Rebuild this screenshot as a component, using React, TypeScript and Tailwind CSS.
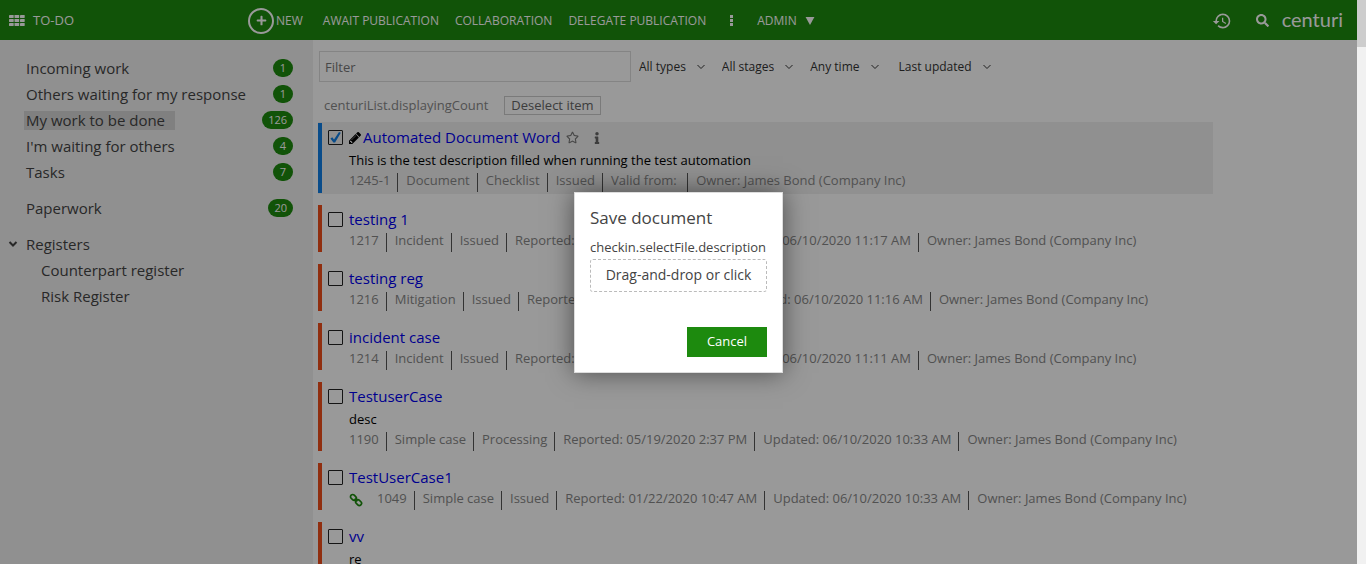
import React from "react";
import { FaInfo, FaPlus, FaRegStar, FaSearch } from "react-icons/fa";
import { MdHistory } from "react-icons/md";

type NavItem = { label: string; count?: number; active?: boolean };

const workItems: NavItem[] = [
  { label: "Incoming work", count: 1 },
  { label: "Others waiting for my response", count: 1 },
  { label: "My work to be done", count: 126, active: true },
  { label: "I'm waiting for others", count: 4 },
  { label: "Tasks", count: 7 },
];

type Row = {
  title: string;
  description?: string;
  meta: string[];
  selected?: boolean;
  linked?: boolean;
};

const owner = "Owner: James Bond (Company Inc)";

const rows: Row[] = [
  {
    title: "Automated Document Word",
    description: "This is the test description filled when running the test automation",
    meta: ["1245-1", "Document", "Checklist", "Issued", "Valid from:\u00a0", owner],
    selected: true,
  },
  {
    title: "testing 1",
    meta: ["1217", "Incident", "Issued", "Reported: 06/10/2020 11:17 AM", "Updated: 06/10/2020 11:17 AM", owner],
  },
  {
    title: "testing reg",
    meta: ["1216", "Mitigation", "Issued", "Reported: 06/10/2020 11:16 AM", "Updated: 06/10/2020 11:16 AM", owner],
  },
  {
    title: "incident case",
    meta: ["1214", "Incident", "Issued", "Reported: 06/10/2020 11:11 AM", "Updated: 06/10/2020 11:11 AM", owner],
  },
  {
    title: "TestuserCase",
    description: "desc",
    meta: ["1190", "Simple case", "Processing", "Reported: 05/19/2020 2:37 PM", "Updated: 06/10/2020 10:33 AM", owner],
  },
  {
    title: "TestUserCase1",
    meta: ["1049", "Simple case", "Issued", "Reported: 01/22/2020 10:47 AM", "Updated: 06/10/2020 10:33 AM", owner],
    linked: true,
  },
  { title: "vv", description: "re", meta: [] },
];

function Chevron({ className }: { className: string }) {
  return (
    <svg viewBox="0 0 10 6" className={className} fill="none" stroke="currentColor" aria-hidden="true">
      <path d="M1.5 1l3.5 3.5L8.5 1" />
    </svg>
  );
}

function GridIcon() {
  return (
    <svg viewBox="0 0 16 11" className="h-[11px] w-4" fill="currentColor" aria-hidden="true">
      {[0, 4, 8].map((y) =>
        [0, 5.5, 11].map((x) => <rect key={`${x}-${y}`} x={x} y={y} width="4.7" height="3" rx="0.4" />),
      )}
    </svg>
  );
}

function PencilIcon() {
  return (
    <svg viewBox="128 149 1515 1515" className="size-3 text-black" fill="currentColor" aria-hidden="true">
      <path d="M491 1536l91-91-235-235-91 91v107h128v128h107zM1014 608q0-22-22-22-10 0-17 7l-542 542q-7 7-7 17 0 22 22 22 10 0 17-7l542-542q7-7 7-17zM960 416l416 416-832 832h-416v-416zM1643 512q0 53-37 90l-166 166-416-416 166-165q36-38 90-38 53 0 91 38l235 234q37 39 37 91z" />
    </svg>
  );
}

function LinkIcon() {
  return (
    <svg viewBox="0 0 14 14" className="size-3.5 text-[#1d8a0e]" fill="none" stroke="currentColor" strokeWidth="1.7" aria-hidden="true">
      <rect x="1.2" y="2.2" width="6.4" height="4.4" rx="2.2" transform="rotate(45 4.4 4.4)" />
      <rect x="6.4" y="7.4" width="6.4" height="4.4" rx="2.2" transform="rotate(45 9.6 9.6)" />
      <path d="M5.6 5.6l2.8 2.8" />
    </svg>
  );
}

function NavLink({ label, count, active }: NavItem) {
  return (
    <li className="flex h-[26px] items-center justify-between">
      <a href="#" className={active ? "-ml-0.5 bg-[#d5d5d5] pr-2.5 pl-0.5 leading-[19px]" : "leading-[19px]"}>
        {label}
      </a>
      {count !== undefined && (
        <span className="min-w-5 rounded-full bg-[#1d8a0e] px-1.5 text-center text-[11px] leading-[18px] text-white">
          {count}
        </span>
      )}
    </li>
  );
}

function Filter({ label, name, last }: { label: string; name: string; last?: boolean }) {
  return (
    <div className={last ? "relative ml-[3px] flex items-center" : "relative flex items-center"}>
      <select aria-label={name} className="field-sizing-content appearance-none bg-transparent pt-px pr-5 text-xs text-[#333]">
        <option>{label}</option>
      </select>
      <Chevron className="pointer-events-none absolute right-0 h-1.5 w-2.5 text-[#333]" />
    </div>
  );
}

function ListRow({ row }: { row: Row }) {
  return (
    <li className={row.selected ? "-mb-px bg-[#f0f0f0] py-px" : ""}>
      <div className={row.selected ? "flex border-l-4 border-[#0f7fe6] pb-px" : "flex border-l-4 border-[#f04e1a]"}>
        <div className="relative mt-[7px] ml-1.5 size-[15px] shrink-0">
          <input
            type="checkbox"
            aria-label={row.title}
            defaultChecked={row.selected}
            className="peer block size-[15px] appearance-none rounded-[1px] border border-[#222]"
          />
          <svg viewBox="0 0 15 15" className="pointer-events-none absolute inset-0 hidden text-[#0f7fe6] peer-checked:block" fill="currentColor" aria-hidden="true">
            <path d="M2.4 8.5l1.9-1.2 1.7 2.1 5-7.5 1.8.8-5.7 9.9H5.4z" />
          </svg>
        </div>
        <div className="ml-1.5 min-w-0">
          <div className="flex h-7 items-center pt-0.5">
            {row.selected && (
              <span className="mr-0.5">
                <PencilIcon />
              </span>
            )}
            <a href="#" className="text-[15px] text-[#0000ee]">{row.title}</a>
            {row.selected && (
              <>
                <button aria-label="Add to favourites" className="ml-1.5 text-[#777]">
                  <FaRegStar className="size-[13px]" />
                </button>
                <button aria-label="Details" className="ml-3 text-[#666]">
                  <FaInfo className="size-3" />
                </button>
              </>
            )}
          </div>
          {row.description && <p className="h-[22px] text-[13px] leading-[18px] text-black">{row.description}</p>}
          <ul className="flex h-[19px] text-[13px] leading-[15px] whitespace-nowrap text-[#888]">
            {row.linked && (
              <li className="mr-1.5 flex items-center">
                <LinkIcon />
              </li>
            )}
            {row.meta.map((text, i) => (
              <li key={i} className="border-[#555] pr-[7px] pl-2 not-last:border-r first:pl-0">
                {text}
              </li>
            ))}
          </ul>
        </div>
      </div>
    </li>
  );
}

export default function App() {
  return (
    <div className="flex h-screen overflow-hidden bg-white font-['Open_Sans','Noto_Sans',sans-serif] text-[#444]">
      <div className="relative flex min-w-0 flex-1 flex-col">
        <header className="flex h-10 shrink-0 items-center justify-between bg-[#1d8a0e] pt-px text-xs font-medium whitespace-nowrap text-white">
          <div className="flex items-center">
            <div className="flex w-[248px] items-center gap-2 pl-[9px]">
              <GridIcon />
              <a href="#" className="text-[13px]">TO-DO</a>
            </div>
            <nav className="flex items-center gap-4">
              <a href="#" className="mr-1 flex items-center gap-0.5">
                <span className="flex size-[26px] items-center justify-center rounded-full border-2">
                  <FaPlus className="size-[11px]" aria-hidden="true" />
                </span>
                NEW
              </a>
              <a href="#">AWAIT PUBLICATION</a>
              <a href="#">COLLABORATION</a>
              <a href="#">DELEGATE PUBLICATION</a>
              <button aria-label="More" className="mx-2 flex flex-col gap-px">
                <span className="size-[3px] bg-white" />
                <span className="size-[3px] bg-white" />
                <span className="size-[3px] bg-white" />
              </button>
              <button className="flex items-center gap-2">
                ADMIN
                <svg viewBox="0 0 10 9" className="h-2 w-2.5" fill="currentColor" aria-hidden="true">
                  <path d="M0 0h10L5 9z" />
                </svg>
              </button>
            </nav>
          </div>
          <div className="flex items-center pr-3.5">
            <button aria-label="History"><MdHistory className="size-5" /></button>
            <button aria-label="Search" className="ml-6"><FaSearch className="size-[13px]" /></button>
            <span className="ml-[13px] pb-1 font-[Lato] text-xl leading-none font-normal">centuri</span>
          </div>
        </header>

        <div className="flex min-h-0 flex-1">
          <aside className="w-[313px] shrink-0 bg-[#f0f0f0] pt-[15px] pr-5 pl-[26px] text-[15px]">
            <ul>
              {workItems.map((item) => <NavLink key={item.label} {...item} />)}
            </ul>
            <ul className="mt-2.5">
              <NavLink label="Paperwork" count={20} />
            </ul>
            <div className="mt-2.5">
              <button className="-ml-[18px] flex h-[26px] items-center gap-2">
                <Chevron className="h-1.5 w-2.5 stroke-2" />
                Registers
              </button>
              <ul className="pl-[15px]">
                <NavLink label="Counterpart register" />
                <NavLink label="Risk Register" />
              </ul>
            </div>
          </aside>

          <main className="min-w-0 flex-1 overflow-hidden pt-[11px] pl-[5px]">
            <div className="flex items-center gap-4">
              <input
                aria-label="Filter"
                placeholder="Filter"
                className="ml-px -mr-2 h-[31px] w-[312px] border border-[#ddd] px-[5px] text-[13px] placeholder:text-[#777]"
              />
              <Filter name="Type" label="All types" />
              <Filter name="Stage" label="All stages" />
              <Filter name="Time" label="Any time" />
              <Filter name="Sort order" label="Last updated" last />
            </div>
            <div className="mt-3.5 flex items-center gap-4 pl-1.5 text-[13px] text-[#888]">
              <span>centuriList.displayingCount</span>
              <button className="h-[19px] border border-[#ccc] px-1.5 text-[13px] leading-none text-[#666]">Deselect item</button>
            </div>
            <ul className="mt-1.5 flex w-[895px] flex-col gap-3">
              {rows.map((row) => <ListRow key={row.title} row={row} />)}
            </ul>
          </main>
        </div>

        <div className="absolute inset-0 grid place-items-center bg-black/40">
          <div role="dialog" aria-labelledby="save-title" className="w-[209px] border border-[#ddd] bg-white px-[15px] pt-[13px] pb-[15px] shadow-[0_0_24px_rgba(0,0,0,0.5)]">
            <h2 id="save-title" className="text-[17px] leading-6">Save document</h2>
            <p className="mt-[7px] text-[13px] leading-5 whitespace-nowrap">checkin.selectFile.description</p>
            <button className="mt-0.5 h-[33px] w-full rounded-[3px] border border-dashed border-[#bbb] text-sm">
              Drag-and-drop or click
            </button>
            <div className="mt-[35px] flex justify-end">
              <button className="h-[30px] w-20 bg-[#1d8a0e] pt-px text-[13px] font-medium text-white">Cancel</button>
            </div>
          </div>
        </div>
      </div>
      <div className="w-[9px] shrink-0 bg-[#f1f1f1]">
        <div className="h-[47px] bg-[#cdcdcd]" />
      </div>
    </div>
  );
}
